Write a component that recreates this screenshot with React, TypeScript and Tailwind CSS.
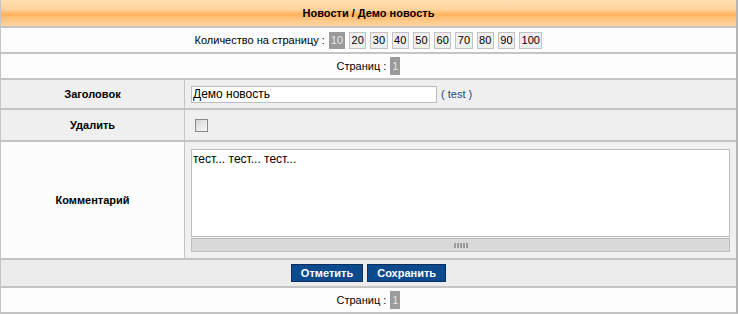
import React from "react";

const perPage = ["10", "20", "30", "40", "50", "60", "70", "80", "90", "100"];

function PageBox({ label, active }: { label: string; active?: boolean }) {
  return (
    <span
      className={
        active
          ? "border border-[#9a9a9a] bg-[#9a9a9a] text-[#e4e4e4] px-[1px] leading-[15px]"
          : "border border-[#c2c2c2] bg-[#efefef] text-black px-[1.5px] leading-[15px]"
      }
    >
      {label}
    </span>
  );
}

export default function App() {
  return (
    <div className="w-[738px] bg-white font-['Liberation_Sans',Arial,sans-serif] text-[11px] text-black">
      <div className="border-l border-r-2 border-l-[#c4c4c4] border-r-[#b4b4b4] border-b-2 border-b-[#c4c4c4]">
        {/* Header */}
        <div className="h-[28px] flex items-center justify-center font-bold bg-[linear-gradient(to_bottom,#ffddb0_0%,#ffd49d_36%,#ffb35c_56%,#ffc27c_70%,#ffd5a0_100%)] border-b-2 border-[#c4c4c4]">
          Новости / Демо новость
        </div>

        {/* Per page */}
        <div className="h-[26px] flex items-center justify-center gap-[4px] bg-[#fdfdfd] border-b-2 border-[#c4c4c4]">
          <span>Количество на страницу :</span>
          {perPage.map((p, i) => (
            <PageBox key={p} label={p} active={i === 0} />
          ))}
        </div>

        {/* Pages */}
        <div className="h-[26px] flex items-center justify-center gap-[4px] bg-[#fdfdfd] border-b-2 border-[#c4c4c4]">
          <span>Страниц :</span>
          <span className="bg-[#9a9a9a] text-[#e4e4e4] px-[2px] leading-[18px]">1</span>
        </div>

        {/* Title row */}
        <div className="h-[30px] flex bg-[#efefef] border-b-2 border-[#c4c4c4]">
          <div className="w-[184px] flex items-center justify-center font-bold border-r border-[#c4c4c4]">
            Заголовок
          </div>
          <div className="flex-1 flex items-center pl-[6px] gap-[4px]">
            <input
              readOnly
              defaultValue="Демо новость"
              className="w-[246px] h-[17px] border border-[#bdbdbd] bg-white px-[1px] text-[12px] text-black outline-none font-['Liberation_Sans',Arial,sans-serif]"
            />
            <span className="text-[#174a86]">( test )</span>
          </div>
        </div>

        {/* Delete row */}
        <div className="h-[32px] flex bg-[#efefef] border-b-2 border-[#c4c4c4]">
          <div className="w-[184px] flex items-center justify-center font-bold border-r border-[#c4c4c4]">
            Удалить
          </div>
          <div className="flex-1 flex items-center pl-[10px]">
            <div className="w-[13px] h-[13px] border border-[#8a8a8a] bg-[linear-gradient(135deg,#d4d4d4_0%,#e6e6e6_50%,#f6f6f6_100%)]" />
          </div>
        </div>

        {/* Comment row */}
        <div className="h-[118px] flex border-b-2 border-[#c4c4c4]">
          <div className="w-[184px] flex items-center justify-center font-bold bg-[#fcfcfc] border-r border-[#c4c4c4]">
            Комментарий
          </div>
          <div className="flex-1 flex flex-col bg-[#f0f0f0] pl-[6px] pt-[7px]">
            <textarea
              readOnly
              defaultValue="тест... тест... тест..."
              className="w-[539px] h-[88px] resize-none border border-[#bdbdbd] bg-white px-[1px] py-[2px] text-[12px] leading-[14px] text-black outline-none font-['Liberation_Sans',Arial,sans-serif]"
            />
            <div className="mt-[1px] w-[539px] h-[14px] border border-[#bdbdbd] bg-[#d9d9d9] flex items-center justify-center">
              <div className="flex gap-[1px]">
                <span className="w-[2px] h-[5px] bg-[#9a9a9a]" />
                <span className="w-[2px] h-[5px] bg-[#9a9a9a]" />
                <span className="w-[2px] h-[5px] bg-[#9a9a9a]" />
                <span className="w-[2px] h-[5px] bg-[#9a9a9a]" />
                <span className="w-[2px] h-[5px] bg-[#9a9a9a]" />
              </div>
            </div>
          </div>
        </div>

        {/* Buttons */}
        <div className="h-[28px] flex items-center justify-center gap-[4px] bg-[#ececec] border-b-2 border-[#c4c4c4]">
          <button className="h-[18px] px-[9px] border border-[#0a2f5c] bg-[#0c4a8e] text-white font-bold text-[11px] leading-[16px]">
            Отметить
          </button>
          <button className="h-[18px] px-[9px] border border-[#0a2f5c] bg-[#0c4a8e] text-white font-bold text-[11px] leading-[16px]">
            Сохранить
          </button>
        </div>

        {/* Pages bottom */}
        <div className="h-[24px] flex items-center justify-center gap-[4px] bg-[#fdfdfd]">
          <span>Страниц :</span>
          <span className="bg-[#9a9a9a] text-[#e4e4e4] px-[2px] leading-[18px]">1</span>
        </div>
      </div>
    </div>
  );
}
